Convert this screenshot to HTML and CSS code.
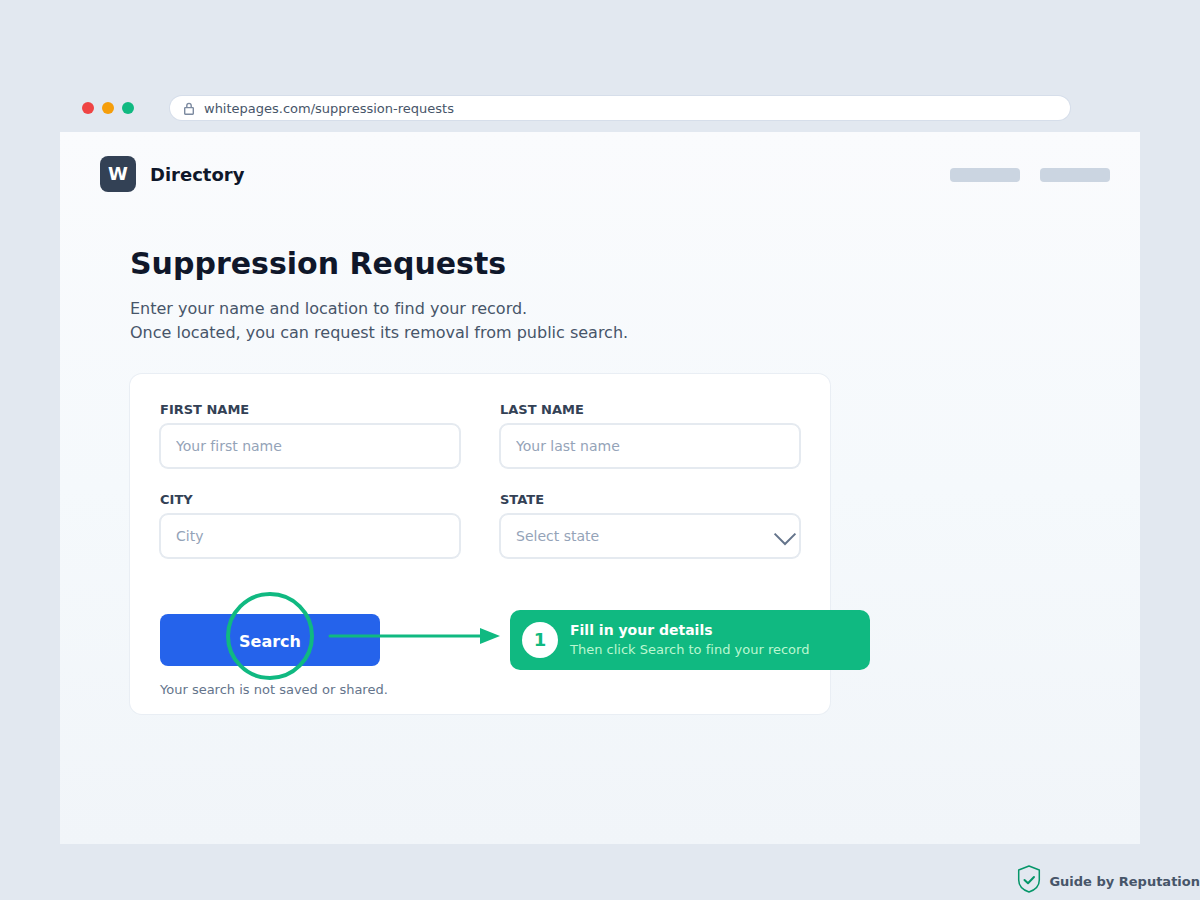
FILE: index.html
```html
<!DOCTYPE html>
<html lang="en">
<head>
  <meta charset="UTF-8" />
  <meta name="viewport" content="width=device-width, initial-scale=1.0" />
  <title>Suppression Requests</title>
  <link rel="stylesheet" href="styles.css">
</head>
<body>
  <div class="browser">
    <div class="titlebar">
      <div class="dots">
        <span class="dot red"></span>
        <span class="dot amber"></span>
        <span class="dot green"></span>
      </div>
      <div class="address">
        <svg width="12" height="14" viewBox="0 0 12 14" fill="none" stroke="#7c8aa0" stroke-width="1.4">
          <rect x="1.7" y="6.6" width="8.6" height="6.6" rx="0.6"/>
          <path d="M3.8 6.6V4.6a2.2 2.2 0 0 1 4.4 0V6.6"/>
        </svg>
        <input type="text" aria-label="Address" value="whitepages.com/suppression-requests" readonly>
      </div>
    </div>

    <div class="page">
      <header>
        <div class="logo">W</div>
        <div class="brand">Directory</div>
        <nav>
          <span class="nav-item"></span>
          <span class="nav-item"></span>
        </nav>
      </header>

      <main>
        <h1>Suppression Requests</h1>
        <p class="intro">Enter your name and location to find your record.<br>Once located, you can request its removal from public search.</p>

        <form class="card">
          <div class="fields">
            <div class="field">
              <label for="first">FIRST NAME</label>
              <input type="text" id="first" placeholder="Your first name">
            </div>
            <div class="field">
              <label for="last">LAST NAME</label>
              <input type="text" id="last" placeholder="Your last name">
            </div>
            <div class="field">
              <label for="city">CITY</label>
              <input type="text" id="city" placeholder="City">
            </div>
            <div class="field">
              <label for="state">STATE</label>
              <div class="select-wrap">
                <select id="state">
                  <option>Select state</option>
                </select>
                <svg class="chevron" width="24" height="14" viewBox="0 0 24 14" fill="none" stroke="#64748b" stroke-width="2">
                  <path d="M1.6 1.6L12 12L22.4 1.6"/>
                </svg>
              </div>
            </div>
          </div>

          <div class="search-row">
            <button type="button">Search</button>
            <!-- ring around the button, arrow to the callout -->
            <svg class="pointer" width="342" height="88" viewBox="0 0 342 88" fill="none" stroke="#10b981">
              <circle cx="110" cy="44" r="42" stroke-width="4"/>
              <path d="M170 44H322" stroke-width="3" stroke-linecap="round"/>
              <path d="M320 36L340 44L320 52Z" fill="#10b981" stroke="none"/>
            </svg>
            <div class="callout">
              <div class="step">1</div>
              <div>
                <div class="callout-title">Fill in your details</div>
                <div class="callout-text">Then click Search to find your record</div>
              </div>
            </div>
          </div>
          <p class="note">Your search is not saved or shared.</p>
        </form>
      </main>
    </div>
  </div>

  <footer>
    <svg width="24" height="28" viewBox="0 0 24 28" fill="none" stroke="#059669" stroke-width="1.5" stroke-linecap="round" stroke-linejoin="round">
      <path d="M12 1L22.3 5V15C22.3 20.5 18 25 12 27C6 25 1.7 20.5 1.7 15V5Z"/>
      <path d="M7.5 15L11 18.3L17 12" stroke-width="2"/>
    </svg>
    <span>Guide by Reputation</span>
  </footer>
</body>
</html>
```

FILE: styles.css
```css
* {
  box-sizing: border-box;
}
body {
  margin: 0;
  min-height: 100vh;
  display: flex;
  flex-direction: column;
  font-family: "DejaVu Sans", sans-serif;
  font-variant-ligatures: none;
  background: #e2e8f0;
  color: #0f172a;
  overflow-x: hidden;
}
h1, p {
  margin: 0;
}
input, select, button {
  font-family: inherit;
  font-variant-ligatures: inherit;
}
.browser {
  flex: 1;
  display: flex;
  flex-direction: column;
  margin: 84px 60px 0;
}
.titlebar {
  display: flex;
  align-items: center;
  gap: 36px;
  height: 48px;
  padding: 0 70px 0 22px;
}
.dots {
  display: flex;
  gap: 8px;
}
.dot {
  width: 12px;
  height: 12px;
  border-radius: 50%;
}
.red {
  background: #ef4444;
}
.amber {
  background: #f59e0b;
}
.green {
  background: #10b981;
}
.address {
  flex: 1;
  display: flex;
  align-items: center;
  gap: 9px;
  height: 24px;
  padding: 0 13px;
  background: #fff;
  border-radius: 12px;
  box-shadow: 0 0 0 1px #d6deea;
}
.address input {
  flex: 1;
  padding: 0;
  border: 0;
  outline: 0;
  background: none;
  font-size: 13px;
  color: #475569;
}
.page {
  flex: 1;
  background: linear-gradient(#fafbfd, #f5f9fc 50%, #f1f5f9);
}
header {
  display: flex;
  align-items: center;
  padding: 24px 30px 0 40px;
}
.logo {
  width: 36px;
  height: 36px;
  border-radius: 8px;
  background: #334155;
  color: #fff;
  font-size: 18px;
  font-weight: 700;
  line-height: 36px;
  text-align: center;
}
.brand {
  margin-left: 14px;
  font-size: 18px;
  font-weight: 700;
}
nav {
  display: flex;
  gap: 20px;
  margin-left: auto;
  padding-top: 2px;
}
.nav-item {
  width: 70px;
  height: 14px;
  border-radius: 4px;
  background: #cbd5e1;
}
main {
  padding: 54px 70px 60px;
}
h1 {
  font-size: 30px;
  line-height: 36px;
}
.intro {
  margin-top: 15px;
  font-size: 16px;
  line-height: 24px;
  color: #475569;
}
.card {
  max-width: 700px;
  margin-top: 29px;
  padding: 28px 30px 16px;
  background: #fff;
  border-radius: 12px;
  box-shadow: 0 0 0 1px #e9eef4;
}
.fields {
  display: grid;
  grid-template-columns: 1fr 1fr;
  gap: 24px 40px;
}
.field label {
  display: block;
  margin-bottom: 6px;
  font-size: 13px;
  font-weight: 700;
  line-height: 16px;
  color: #334155;
}
.field input,
.field select {
  display: block;
  width: 100%;
  height: 44px;
  padding: 0 15px;
  border: 1px solid #e5eaf0;
  border-radius: 8px;
  box-shadow: 0 0 0 1px #e5eaf0;
  background: #fff;
  font-size: 14px;
  color: #94a3b8;
  appearance: none;
}
.field input::placeholder {
  color: #94a3b8;
}
.select-wrap {
  position: relative;
}
.chevron {
  position: absolute;
  right: 3px;
  top: 18px;
  pointer-events: none;
}
.search-row {
  position: relative;
  margin-top: 56px;
}
.search-row button {
  display: block;
  width: 220px;
  height: 52px;
  padding: 2px 0 0;
  border: 0;
  border-radius: 8px;
  background: #2563eb;
  color: #fff;
  font-size: 16px;
  font-weight: 700;
  cursor: pointer;
}
.pointer {
  position: absolute;
  left: 0;
  top: -22px;
  pointer-events: none;
}
.callout {
  position: absolute;
  left: 350px;
  top: -4px;
  display: flex;
  align-items: center;
  gap: 12px;
  width: 360px;
  height: 60px;
  padding: 0 12px;
  border-radius: 10px;
  background: #10b981;
  color: #fff;
}
.step {
  width: 36px;
  height: 36px;
  border-radius: 50%;
  background: #fff;
  color: #10b981;
  font-size: 18px;
  font-weight: 700;
  line-height: 36px;
  text-align: center;
}
.callout-title {
  font-size: 14px;
  font-weight: 700;
  line-height: 20px;
}
.callout-text {
  font-size: 13px;
  line-height: 20px;
  color: #bbf7d0;
}
.note {
  margin-top: 16px;
  font-size: 13px;
  line-height: 16px;
  color: #64748b;
}
footer {
  display: flex;
  align-items: center;
  justify-content: flex-end;
  gap: 8px;
  height: 56px;
  padding-top: 14px;
  font-size: 13px;
  font-weight: 700;
  color: #475569;
  white-space: nowrap;
}
footer span {
  padding-top: 4px;
}
```
